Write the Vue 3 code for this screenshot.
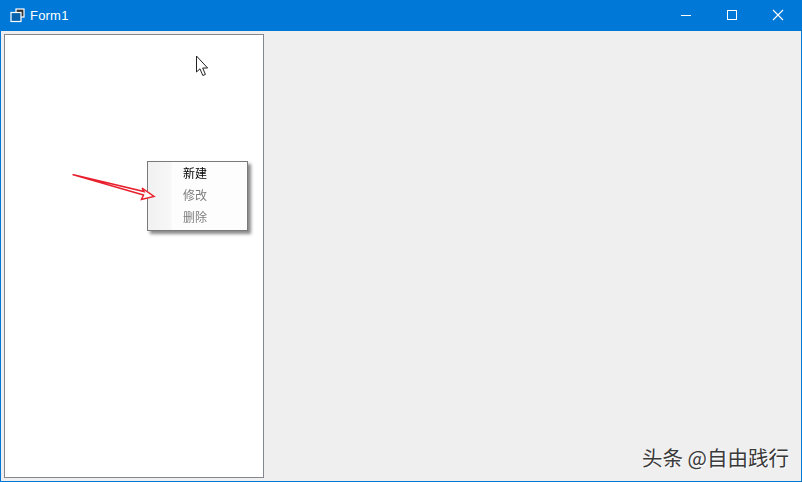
<script setup>
const items = [
  { label: '新建', disabled: false },
  { label: '修改', disabled: true },
  { label: '删除', disabled: true },
]
</script>

<template>
  <div class="window">
    <header class="titlebar">
      <svg class="app-icon" width="16" height="16" viewBox="0 0 16 16">
        <rect x="7" y="1" width="8" height="8" fill="#333" stroke="#fff" stroke-width="1.2" />
        <rect x="2" y="4.5" width="10" height="9" fill="#0a62ad" stroke="#fff" stroke-width="1.2" />
      </svg>
      <span class="title">Form1</span>
      <div class="controls">
        <div class="ctl">
          <svg width="12" height="12" viewBox="0 0 12 12"><path d="M1 6.5H11" stroke="#fff" fill="none" /></svg>
        </div>
        <div class="ctl">
          <svg width="12" height="12" viewBox="0 0 12 12"><rect x="1.5" y="1.5" width="9" height="9" stroke="#fff" fill="none" /></svg>
        </div>
        <div class="ctl">
          <svg width="12" height="12" viewBox="0 0 12 12"><path d="M1 1L11 11M11 1L1 11" stroke="#fff" fill="none" stroke-width="1.1" /></svg>
        </div>
      </div>
    </header>

    <main class="client">
      <section class="panel">
        <svg class="cursor" width="14" height="22" viewBox="0 0 14 22">
          <path d="M1.5 1V17L5 13.8L7.8 20.5L10.4 19.4L7.7 13H12.6Z" fill="#fff" stroke="#222" stroke-width="1" stroke-linejoin="miter" />
        </svg>

        <ul class="menu">
          <li v-for="item in items" :key="item.label" class="menu-item" :class="{ disabled: item.disabled }">
            {{ item.label }}
          </li>
        </ul>

        <svg class="arrow" width="90" height="32" viewBox="0 0 90 32">
          <path d="M0.5 0.5L72 17.5L70 14L82 22.5L69.5 25.5L71.5 21Z" fill="#fff" stroke="#e8202e" stroke-width="1.5" stroke-linejoin="miter" />
        </svg>
      </section>
      <div class="watermark">头条 @自由践行</div>
    </main>
  </div>
</template>

<style>
html, body { margin: 0; padding: 0; }
</style>

<style scoped>
.window {
  width: 802px;
  height: 482px;
  box-sizing: border-box;
  display: flex;
  flex-direction: column;
  background: #0078d7;
  overflow: hidden;
  font-family: "Noto Sans CJK SC", "Liberation Sans", sans-serif;
}
.titlebar {
  height: 31px;
  flex: none;
  display: flex;
  align-items: center;
  padding-left: 9px;
  color: #fff;
}
.app-icon { flex: none; }
.title {
  margin-left: 5px;
  margin-top: -1px;
  font-family: "Liberation Sans", Arial, sans-serif;
  font-size: 13px;
  color: #fff;
  letter-spacing: 0.2px;
}
.controls { margin-left: auto; margin-right: 1px; display: flex; height: 31px; }
.ctl {
  width: 46px;
  height: 31px;
  display: flex;
  align-items: center;
  justify-content: center;
  margin-top: -1px;
}
.client {
  position: relative;
  flex: 1;
  margin: 0 1px 1px;
  background: #efefef;
  padding: 3px 0 3px 3px;
  display: flex;
  min-height: 0;
}
.panel {
  position: relative;
  width: 260px;
  box-sizing: border-box;
  background: #fff;
  border: 1px solid #828790;
}
.cursor { position: absolute; left: 190px; top: 20px; }
.arrow { position: absolute; left: 67px; top: 139px; }
.menu {
  position: absolute;
  left: 142px;
  top: 126px;
  width: 101px;
  height: 70px;
  box-sizing: border-box;
  margin: 0;
  padding: 0;
  list-style: none;
  border: 1px solid #7a7a7a;
  background: linear-gradient(90deg, #f1f1f1 0, #f7f7f7 23px, #fdfdfd 24px, #fdfdfd 100%);
  box-shadow: 3px 3px 3px rgba(60, 60, 60, 0.6);
  will-change: opacity;
}
.menu-item {
  height: 22px;
  line-height: 21px;
  padding-left: 35px;
  font-size: 12px;
  color: #000;
}
.menu-item.disabled { color: #7d7d7d; }
.watermark {
  position: absolute;
  right: 12px;
  bottom: 12px;
  font-size: 20.5px;
  line-height: 24px;
  font-weight: 400;
  color: #3a3a3a;
  text-shadow: 1px 1px 1px #fff;
  white-space: nowrap;
}
</style>
